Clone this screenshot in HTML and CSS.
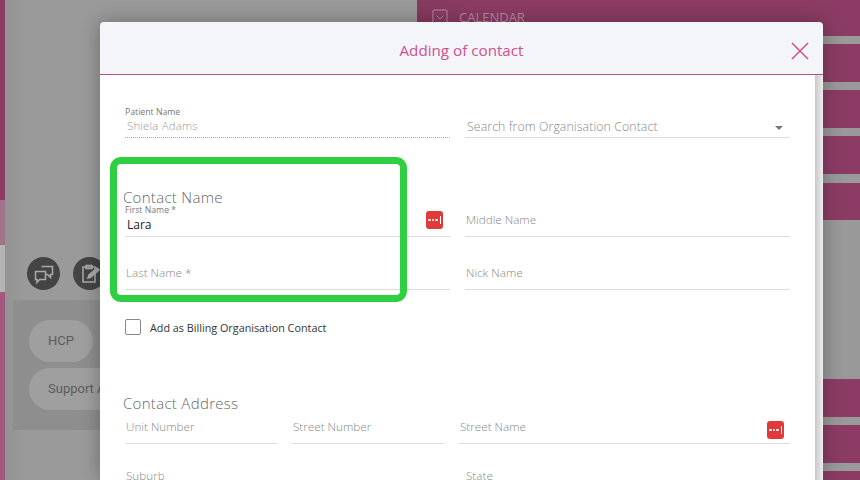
FILE: index.html
```html
<!DOCTYPE html>
<html lang="en">
<head>
<meta charset="utf-8">
<title>Adding of contact</title>
<link rel="stylesheet" href="styles.css">
</head>
<body>
<div class="page">
  <div class="strip"><div class="s1"></div><div class="s2"></div><div class="s4"></div><div class="s3"></div></div>
  <div class="middle">
    <div class="tools">
      <span class="tool"><svg viewBox="0 0 24 24" width="24" height="24" fill="none" stroke="#aaa" stroke-width="1.5"><path d="M9.500 4.500h11v8h-2v3l-3-3h-2"/><path d="M3.500 9.500h10v8h-6l-2.500 3v-3h-1.500z" fill="#444"/></svg></span>
      <span class="tool"><svg viewBox="0 0 24 24" width="24" height="24" fill="none" stroke="#aaa" stroke-width="1.500"><path d="M5 5h12v15H5z"/><path d="M8 3.500h6v3H8z"/><path d="M10 16l1-3 8-7 2 2-8 7z" fill="#aaa"/></svg></span>
    </div>
    <div class="tags">
      <span class="tag tag-hcp">HCP</span>
      <span class="tag tag-support">Support Agency</span>
    </div>
  </div>
  <div class="panel">
    <div class="pbar pb-first"><span class="cal-box"><svg viewBox="0 0 16 16" width="16" height="16" fill="none" stroke="#b98aa3" stroke-width="1"><rect x="1" y="1" width="14" height="14" rx="1"/><path d="M4.500 6.500 8 10l3.500-3.500"/></svg></span><span class="cal-text">CALENDAR</span></div>
    <div class="pbar pb-a"></div>
    <div class="pbar pb-a"></div>
    <div class="pbar pb-a"></div>
    <div class="pbar pb-b"></div>
    <div class="pbar pb-c"></div>
    <div class="pbar pb-c2"></div>
    <div class="pbar pb-d"></div>
  </div>
</div>

<section class="modal">
  <header class="modal-head">
    <h1 class="modal-title">Adding of contact</h1>
    <svg class="close" viewBox="0 0 18 18" width="18" height="18" fill="none" stroke="#d0508f" stroke-width="1.500"><path d="M1 1l16 16M17 1 1 17"/></svg>
  </header>
  <div class="modal-main">
    <div class="modal-body">
      <div class="row r-patient">
        <div class="field dotted"><span class="mini">Patient Name</span><span class="value muted">Shiela Adams</span></div>
        <div class="field select"><span class="ph ph-search">Search from Organisation Contact</span><span class="caret"></span></div>
      </div>
      <h2 class="section s-name">Contact Name</h2>
      <div class="row r-first">
        <div class="field"><span class="mini mini-first">First Name *</span><span class="value">Lara</span><span class="more more-a"><i></i><i></i><i></i><b></b></span></div>
        <div class="field"><span class="ph">Middle Name</span></div>
      </div>
      <div class="row r-last">
        <div class="field"><span class="ph">Last Name <em>*</em></span></div>
        <div class="field"><span class="ph">Nick Name</span></div>
      </div>
      <label class="check"><span class="box"></span><span>Add as Billing Organisation Contact</span></label>
      <h2 class="section s-addr">Contact Address</h2>
      <div class="row r-addr">
        <div class="field f-unit"><span class="ph">Unit Number</span></div>
        <div class="field f-unit"><span class="ph">Street Number</span></div>
        <div class="field f-street"><span class="ph">Street Name</span><span class="more more-b"><i></i><i></i><i></i><b></b></span></div>
      </div>
      <div class="row r-suburb">
        <div class="field"><span class="ph">Suburb</span></div>
        <div class="field"><span class="ph">State</span></div>
      </div>
    </div>
    <div class="scrollbar"></div>
  </div>
</section>
<div class="highlight"></div>
</body>
</html>
```
FILE: styles.css
```css
* { box-sizing: border-box; }
html, body { margin: 0; height: 480px; overflow: hidden; }
body { font-family: "Open Sans", sans-serif; background: #999; position: relative; }

.page { display: flex; height: 480px; background: #999; }
.strip { width: 5px; display: flex; flex-direction: column; flex: none; }
.s1 { height: 200px; background: #8c3c64; }
.s2 { height: 45px; background: #a0738a; }
.s4 { height: 47px; background: #b3b3b3; }
.s3 { flex: 1; background: #a3597f; }

.middle { width: 412px; flex: none; padding: 245px 0 0 8px; background: linear-gradient(90deg, #939393, #9a9a9a 20px); }
.tools { display: flex; gap: 13px; height: 55px; padding: 12px 0 0 14px; }
.tool { width: 33px; height: 33px; border-radius: 50%; background: #444; display: flex; align-items: center; justify-content: center; flex: none; }
.tags { width: 120px; height: 130px; background: #8e8e8e; padding: 20px 0 0 16px; display: flex; flex-direction: column; gap: 6px; align-items: flex-start; }
.tag { height: 42px; border-radius: 21px; background: #9f9f9f; color: #5c5c5c; font: 400 13px/42px Roboto, sans-serif; padding: 0 19px; white-space: nowrap; }

.panel { flex: 1; display: flex; flex-direction: column; background: #999; }
.pbar { background: linear-gradient(90deg, #853a5f, #8c3c64 60px); flex: none; }
.pb-first { height: 36px; display: flex; align-items: flex-start; padding: 9px 0 0 15px; gap: 11px; color: #b98aa3; font-size: 13px; line-height: 17px; }
.cal-box { display: flex; flex: none; }
.pb-a { height: 38px; margin-top: 8px; }
.pb-b { height: 37px; margin-top: 9px; }
.pb-c { height: 38px; margin-top: 159px; }
.pb-c2 { height: 38px; margin-top: 8px; }
.pb-d { flex: 1; margin-top: 8px; }

.modal { position: absolute; left: 100px; top: 22px; width: 723px; height: 458px; display: flex; flex-direction: column; box-shadow: 0 0 20px rgba(0,0,0,.3); border-radius: 4px 4px 0 0; overflow: hidden; }
.modal-head { height: 53px; flex: none; background: #f4f5f9; border-bottom: 1px solid #bd4f86; display: flex; align-items: center; justify-content: center; position: relative; }
.modal-title { margin: 3px 0 0; font-size: 15.2px; font-weight: 400; color: #d0508f; line-height: 20px; }
.close { position: absolute; left: 691px; top: 20px; }
.modal-main { flex: 1; display: flex; min-height: 0; }
.modal-body { width: 715px; background: #fff; padding: 0 33px 0 25px; flex: none; overflow: hidden; }
.scrollbar { flex: 1; background: linear-gradient(90deg, #c8c8c8, #eee); }

.row { display: grid; grid-template-columns: 325px 325px; column-gap: 15px; }
.field { position: relative; border-bottom: 1px solid #dcdcdc; height: 100%; display: flex; flex-direction: column; justify-content: flex-end; }
.dotted { border-bottom: 1px dotted #aaa; }
.mini { position: absolute; left: 0; top: 0; font-size: 8.700px; line-height: 12px; color: #777; white-space: nowrap; }
.mini-first { top: -3px; }
.value { font-size: 12px; line-height: 16px; color: #222; padding-left: 2px; margin-bottom: 3px; }
.value.muted { color: #999; font-size: 11.400px; font-weight: 300; letter-spacing: .2px; margin-bottom: 3px; }
.ph { font-size: 11.700px; font-weight: 300; line-height: 16px; color: #888; padding-left: 1px; margin-bottom: 9px; white-space: nowrap; }
.ph em { font-style: normal; color: #777; }

.r-patient { margin-top: 31px; height: 32px; }
.field .ph-search { font-size: 12.300px; letter-spacing: .1px; margin-bottom: 2px; padding-left: 2px; }
.caret { position: absolute; left: 310px; top: 20px; border: 4px solid transparent; border-top: 4px solid #777; border-bottom: 0; }

.section { margin: 0; font-size: 15px; font-weight: 300; color: #666; line-height: 20px; margin-left: -2px; letter-spacing: .3px; }
.s-name { margin-top: 49px; }
.r-first { height: 30px; }
.r-last { height: 53px; }
.more { position: absolute; width: 17px; height: 18px; border-radius: 3px; background: #e03a3a; display: flex; align-items: center; justify-content: center; gap: 1px; }
.more i { width: 2.500px; height: 2.500px; background: #fff; border-radius: 50%; }
.more b { width: 1px; height: 8px; background: #fff; margin-left: 1px; }
.more-a { left: 301px; top: 4px; }
.more-b { left: 308px; top: 8px; }

.check { display: flex; align-items: center; gap: 9px; margin-top: 29px; height: 16px; font-size: 10.800px; color: #333; }
.box { width: 16px; height: 16px; border: 1px solid #888; border-radius: 2px; background: #fff; flex: none; }

.s-addr { margin-top: 58px; }
.r-addr { grid-template-columns: 152px 152px 331px; column-gap: 15px; height: 31px; }
.r-addr .ph { margin-bottom: 9px; }
.r-suburb { height: 40px; margin-top: 23px; }
.r-suburb .field { border: 0; justify-content: flex-start; }

.highlight { position: absolute; left: 110px; top: 157px; width: 297px; height: 145px; border: 7px solid #2ecf40; border-radius: 11px; }
```
